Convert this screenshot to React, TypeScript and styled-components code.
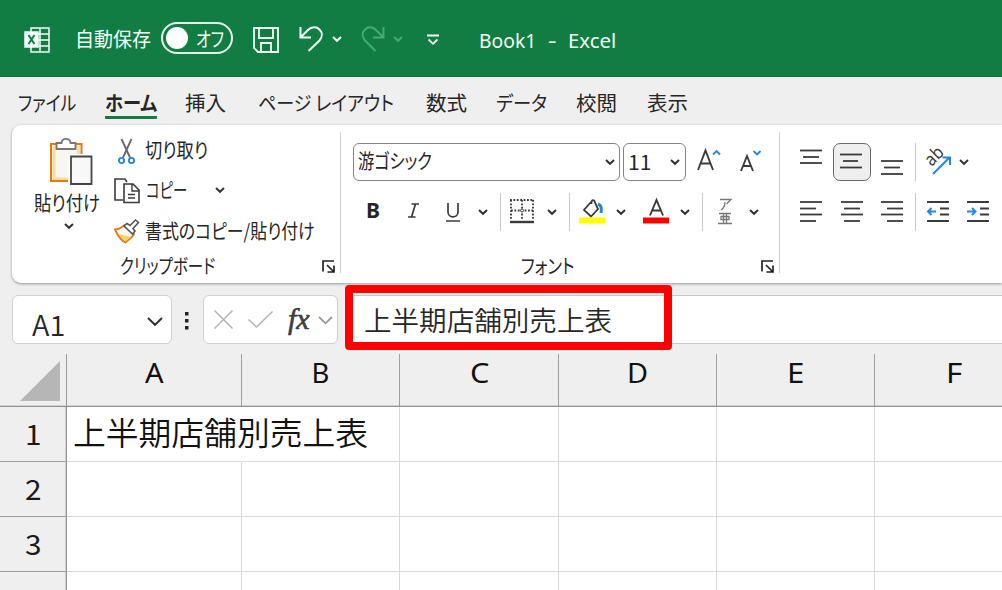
import React, { useLayoutEffect, useRef, useState } from 'react';
import styled, { createGlobalStyle } from 'styled-components';

const GlobalStyle = createGlobalStyle`
  * { box-sizing: border-box; }
  html, body { margin: 0; padding: 0; }
  body {
    background: #efefef;
    font-family: "Noto Sans CJK JP", "Noto Sans", sans-serif;
    color: #262626;
  }
  svg { display: block; flex: none; overflow: visible; }
`;

const Window = styled.div`
  width: 100vw;
  height: 100vh;
  overflow: hidden;
`;

/* ---------- text and icons ---------- */

const LabelBox = styled.span<{ $w: number; $ml?: number; $mt?: number; $size: number; $weight?: number; $color?: string; $font?: string }>`
  display: block;
  flex: none;
  width: ${p => p.$w}px;
  height: 24px;
  line-height: 24px;
  margin-left: ${p => p.$ml ?? 0}px;
  margin-top: ${p => p.$mt ?? 0}px;
  font-size: ${p => p.$size}px;
  font-weight: ${p => p.$weight ?? 400};
  color: ${p => p.$color ?? '#262626'};
  ${p => (p.$font ? `font-family: ${p.$font};` : '')}
  white-space: pre;
`;

const LabelText = styled.span`
  display: inline-block;
  transform-origin: 0 50%;
  font-feature-settings: "palt";
`;

type LabelProps = { text: string; w: number; ml?: number; mt?: number; size?: number; weight?: number; color?: string; font?: string };

function Label({ text, w, ml, mt, size = 20, weight, color, font }: LabelProps) {
  const ref = useRef<HTMLSpanElement>(null);
  const [scale, setScale] = useState(1);
  useLayoutEffect(() => {
    if (ref.current) setScale(w / ref.current.offsetWidth);
  }, [w, text]);
  return (
    <LabelBox $w={w} $ml={ml} $mt={mt} $size={size} $weight={weight} $color={color} $font={font}>
      <LabelText ref={ref} style={{ transform: `scaleX(${scale})` }}>{text}</LabelText>
    </LabelBox>
  );
}

const Drawing = styled.svg<{ $ml?: number; $mt?: number }>`
  margin-left: ${p => p.$ml ?? 0}px;
  margin-top: ${p => p.$mt ?? 0}px;
  fill: none;
`;

type IconProps = { w: number; h: number; ml?: number; mt?: number; stroke?: string; sw?: number; children: React.ReactNode };

const Icon = ({ w, h, ml, mt, stroke = '#3b3b3b', sw = 1.6, children }: IconProps) => (
  <Drawing width={w} height={h} viewBox={`0 0 ${w} ${h}`} $ml={ml} $mt={mt} stroke={stroke} strokeWidth={sw}>
    {children}
  </Drawing>
);

const Chevron = ({ ml, mt, color = '#333', w = 10, sw = 2 }: { ml?: number; mt?: number; color?: string; w?: number; sw?: number }) => (
  <Icon w={w} h={w / 2 + 1} ml={ml} mt={mt} stroke={color} sw={sw}>
    <path d={`M1 1 L${w / 2} ${w / 2 - 0.2} L${w - 1} 1`} />
  </Icon>
);

const Launcher = ({ ml, mt }: { ml?: number; mt?: number }) => (
  <Icon w={13} h={13} ml={ml} mt={mt} stroke="#222" sw={1.7}>
    <path d="M1 11.500V1H12M5 5L11.500 11.500M12 5.500V12H5.500" />
  </Icon>
);

const Lines = ({ rows, ml, mt }: { rows: [number, number, number][]; ml?: number; mt?: number }) => (
  <Icon w={23} h={24} ml={ml} mt={mt} sw={1.8}>
    {rows.map(([y, a, b]) => <path key={y} d={`M${a} ${y}H${b}`} />)}
  </Icon>
);

const SlantedLetters = styled.text`
  font: 400 18px "Noto Sans", sans-serif;
  fill: #3b3b3b;
  stroke: none;
`;

/* ---------- title bar ---------- */

const TitleBar = styled.header`
  display: flex;
  align-items: center;
  height: 77px;
  padding-left: 24px;
  background: #127d43;
  border-bottom: 1px solid #0f7039;
`;

const Toggle = styled.div`
  display: flex;
  align-items: center;
  flex: none;
  width: 72px;
  height: 32px;
  margin-left: 10px;
  padding-left: 3px;
  border: 2px solid #e6f7ec;
  border-radius: 16px;
`;

const Knob = styled.div`
  width: 22px;
  height: 22px;
  border-radius: 50%;
  background: #fff;
`;

/* ---------- tabs ---------- */

const Tabs = styled.nav`
  display: flex;
  height: 48px;
  padding: 14px 0 0 18px;
`;

const Tab = styled.div<{ $ml: number; $active?: boolean }>`
  flex: none;
  height: 28px;
  margin-left: ${p => p.$ml}px;
  border-bottom: ${p => (p.$active ? '3px solid #127d43' : '0')};
  border-radius: 1px;
`;

const tabs = [
  { text: 'ファイル', w: 58, ml: 0 },
  { text: 'ホーム', w: 52, ml: 29, active: true },
  { text: '挿入', w: 41, ml: 28 },
  { text: 'ページ レイアウト', w: 136, ml: 32 },
  { text: '数式', w: 41, ml: 32 },
  { text: 'データ', w: 51, ml: 29 },
  { text: '校閲', w: 41, ml: 29 },
  { text: '表示', w: 41, ml: 30 },
];

/* ---------- ribbon ---------- */

const Ribbon = styled.section`
  display: flex;
  height: 158px;
  margin-left: 12px;
  padding-top: 7px;
  background: #fff;
  border-radius: 9px 0 0 9px;
  box-shadow: 0 1px 3px rgba(0, 0, 0, 0.38);
`;

const Group = styled.div<{ $w: number }>`
  display: flex;
  flex-direction: column;
  flex: none;
  width: ${p => p.$w}px;
  height: 141px;
  border-right: 1px solid #cfcfcf;
`;

const LastGroup = styled(Group)`
  border-right: 0;
`;

const GroupBody = styled.div`
  display: flex;
  height: 122px;
`;

const GroupFooter = styled.div`
  display: flex;
  height: 19px;
`;

const PasteButton = styled.div`
  width: 102px;
  padding-top: 6px;
`;

const Stack = styled.div`
  flex: 1;
`;

const Line = styled.div<{ $h: number; $pl?: number }>`
  display: flex;
  align-items: center;
  height: ${p => p.$h}px;
  padding-left: ${p => p.$pl ?? 0}px;
`;

const Combo = styled.div<{ $w: number; $ml: number }>`
  display: flex;
  align-items: center;
  flex: none;
  width: ${p => p.$w}px;
  height: 38px;
  margin-left: ${p => p.$ml}px;
  border: 1.5px solid #858585;
  border-radius: 6px;
`;

const PressedButton = styled(Combo)`
  background: #efefef;
  border-color: #6a6a6a;
  border-radius: 7px;
`;

const Separator = styled.i<{ $ml: number }>`
  flex: none;
  width: 1px;
  height: 38px;
  margin-left: ${p => p.$ml}px;
  background: #c9c9c9;
`;

/* ---------- formula bar ---------- */

const FormulaBar = styled.section`
  display: flex;
  height: 71px;
  padding: 12px 0 0 12px;
`;

const Field = styled.div<{ $w: number; $ml?: number }>`
  display: flex;
  align-items: center;
  flex: none;
  width: ${p => p.$w}px;
  height: 49px;
  margin-left: ${p => p.$ml ?? 0}px;
  background: #fff;
  border: 1px solid #d0d0d0;
  border-radius: 6px;
`;

const Fx = styled.span`
  flex: none;
  width: 26px;
  height: 36px;
  margin-left: 15px;
  font: italic 400 30px/34px "Liberation Serif", serif;
  -webkit-text-stroke: 0.6px #3d3d3d;
  color: #3d3d3d;
`;

const FormulaInput = styled.div`
  position: relative;
  display: flex;
  align-items: center;
  flex: 1;
  height: 49px;
  margin-left: 8px;
  background: #fff;
  border: 1px solid #c8c8c8;
  border-width: 1px 0;
`;

const Highlight = styled.div`
  position: absolute;
  left: -1px;
  top: -11px;
  width: 327px;
  height: 65px;
  border: 8px solid #fe0000;
  border-radius: 4px;
`;

/* ---------- sheet ---------- */

const columns = '67px 175px 158px 159px 158px 158px 158px';

const HeaderRow = styled.div`
  display: grid;
  grid-template-columns: ${columns};
  height: 53px;
  border-bottom: 1px solid #939393;
  box-shadow: inset 0 -1px #d0d0d0;
`;

const Corner = styled.div`
  display: flex;
  padding: 7px 0 0 20px;
  border-right: 1px solid #999;
`;

const ColumnHead = styled.div`
  display: flex;
  justify-content: center;
  padding: 7px 0 0;
  border-right: 1px solid #a0a0a0;
`;

const SheetRow = styled.div`
  display: grid;
  grid-template-columns: ${columns};
  height: 55px;
`;

const RowHead = styled.div`
  display: flex;
  justify-content: center;
  padding: 14px 0 0 1px;
  background: #efefef;
  border-right: 1px solid #939393;
  border-bottom: 1px solid #a0a0a0;
  box-shadow: inset -1px 0 #d0d0d0;
`;

const Cell = styled.div<{ $open?: boolean }>`
  display: flex;
  padding: 12px 0 0 6px;
  background: #fff;
  border-right: 1px solid ${p => (p.$open ? '#fff' : '#dadada')};
  border-bottom: 1px solid #dadada;
`;

const LETTERS: [string, number][] = [['A', 19], ['B', 18], ['C', 19], ['D', 21], ['E', 17], ['F', 16]];
const latin = '"Noto Sans", sans-serif';

export default function App() {
  return (
    <Window>
      <GlobalStyle />
      <TitleBar>
        <Icon w={27} h={26} mt={3} stroke="#f3fff8" sw={1.5}>
          <path d="M7 5V1H25V25H7V20M7 7H25M7 13H25M7 19H25M16 1V25" />
          <path d="M1 5H14V20H1Z" fill="#f3fff8" />
          <path d="M4.500 8L10.500 17M10.500 8L4.500 17" stroke="#127d43" strokeWidth="2" />
        </Icon>
        <Label text="自動保存" w={76} ml={24} mt={1} color="#f2fff7" />
        <Toggle>
          <Knob />
          <Label text="オフ" w={28} ml={8} mt={1} color="#f2fff7" />
        </Toggle>
        <Icon w={26} h={26} ml={20} mt={4} stroke="#f3fff8" sw={1.8}>
          <path d="M1 1H25V25H5L1 21ZM6 1V11H20V1M8 25V16H18V25" />
        </Icon>
        <Icon w={25} h={26} ml={20} mt={2} stroke="#f3fff8" sw={2}>
          <path d="M1.500 1V11.500H12M2 11L9 4C12.500 .5 17.500 .5 20.500 3.500C23.500 6.500 23.500 11 20.500 14.500L9.500 25" />
        </Icon>
        <Chevron ml={8} mt={1} color="#f3fff8" />
        <Icon w={24} h={26} ml={19} mt={2} stroke="#45ab73" sw={2}>
          <path d="M22.500 1V11.500H12M22 11L15 4C11.500 .5 7 .5 4 3.500C1 6.500 1 11 4 14.500L14.500 25" />
        </Icon>
        <Chevron ml={8} mt={1} color="#45ab73" />
        <Icon w={12} h={12} ml={24} mt={4} stroke="#f3fff8" sw={1.8}>
          <path d="M0 1.500H12M1.500 5.500L6 9.800L10.500 5.500" />
        </Icon>
        <Label text="Book1" w={57} ml={40} mt={5} color="#f2fff7" font={latin} />
        <Label text="-" w={8} ml={12} mt={5} color="#f2fff7" font={latin} />
        <Label text="Excel" w={48} ml={12} mt={5} color="#f2fff7" font={latin} />
      </TitleBar>

      <Tabs>
        {tabs.map(t => (
          <Tab key={t.text} $ml={t.ml} $active={t.active}>
            <Label text={t.text} w={t.w} weight={t.active ? 700 : 400} />
          </Tab>
        ))}
      </Tabs>

      <Ribbon>
        <Group $w={329}>
          <GroupBody>
            <PasteButton>
              <Icon w={44} h={48} ml={37}>
                <path d="M2 6.500H32V44H2Z" fill="#fff" stroke="none" />
                <path d="M5 9H29.500V41H5Z" fill="#f8f6f2" stroke="#fbdf95" strokeWidth="3" />
                <path d="M10 6H2V43H19M24 6H32.500V18" stroke="#e27a1a" strokeWidth="2" />
                <path d="M7.500 11V5H12.500C13 -0.500 21 -0.500 21.500 5H26.500V11Z" fill="#fff" stroke="#777" strokeWidth="1.8" />
                <path d="M22 18.500H42.500V46H22Z" fill="#f8f8f8" stroke="#fff" strokeWidth="5" />
                <path d="M22 18.500H42.500V46H22Z" fill="#f8f8f8" stroke="#444" strokeWidth="1.800" />
              </Icon>
              <Label text="貼り付け" w={66} ml={22} mt={5} />
              <Chevron ml={52} mt={8} />
            </PasteButton>
            <Stack>
              <Line $h={38} $pl={4}>
                <Icon w={17} h={25}>
                  <path d="M3.500 0L12 18.500M13.500 0L5 18.500" stroke="#666" strokeWidth="1.8" />
                  <circle cx="3.500" cy="21.500" r="2.600" stroke="#2488d8" strokeWidth="1.900" />
                  <circle cx="13.500" cy="21.500" r="2.600" stroke="#2488d8" strokeWidth="1.900" />
                </Icon>
                <Label text="切り取り" w={63} ml={10} mt={-3} />
              </Line>
              <Line $h={40}>
                <Icon w={26} h={26} mt={1}>
                  <path d="M9 22H1V1H11L13 4" />
                  <path d="M10 6H19L25 12V24.500H10Z" fill="#fff" />
                  <path d="M18 6V13H25M14 16.500H21M14 20H21" strokeWidth="1.400" />
                </Icon>
                <Label text="コピー" w={41} ml={6} />
                <Chevron ml={28} />
              </Line>
              <Line $h={42}>
                <Icon w={25} h={25}>
                  <path d="M1 10.500C6 10.500 8 8 11 6L20 15C18 19 15 20 11.500 23.500C8 22 4 17 1 10.500Z" fill="#fffaf0" stroke="#e27a1a" strokeWidth="1.900" />
                  <path d="M4.500 15L17 18L11.500 22.500C9 21 7 19 4.500 15Z" fill="#f9cf6a" stroke="none" />
                  <path d="M10 7L13 4.500L16 6.500L21.500 1L24.500 3.500L19 9.500L21 12L18.500 15Z" fill="#fff" stroke="#555" />
                </Icon>
                <Label text="書式のコピー/貼り付け" w={170} ml={6} />
              </Line>
            </Stack>
          </GroupBody>
          <GroupFooter>
            <Label text="クリップボード" w={95} ml={108} />
            <Launcher ml={107} mt={6} />
          </GroupFooter>
        </Group>

        <Group $w={439}>
          <GroupBody>
            <Stack>
              <Line $h={59} $pl={12}>
                <Combo $w={267} $ml={0}>
                  <Label text="游ゴシック" w={74} ml={4} mt={-2} />
                  <Chevron ml={173} mt={1} />
                </Combo>
                <Combo $w={63} $ml={3}>
                  <Label text="11" w={23} ml={4} mt={-2} size={21} />
                  <Chevron ml={19} mt={1} />
                </Combo>
                <Icon w={24} h={22} ml={11} mt={-3} sw={1.9}>
                  <path d="M1 21L8.500 1.500L16 21M3.500 14.500H13.500" />
                  <path d="M16 5.500L19.500 2L23 5.500" stroke="#2488d8" />
                </Icon>
                <Icon w={21} h={22} ml={19} mt={-2} sw={1.9}>
                  <path d="M1 21L7 6L13 21M3 16H11" />
                  <path d="M13.500 1L17 4.500L20.500 1" stroke="#2488d8" />
                </Icon>
              </Line>
              <Line $h={41}>
                <Label text="B" w={14} ml={25} mt={-3} size={21} weight={700} font={latin} />
                <Icon w={11} h={15} ml={28} mt={-2} sw={1.7}>
                  <path d="M3.500 1H11M0 14H7.500M7.500 1L3.500 14" />
                </Icon>
                <Icon w={14} h={19} ml={27} mt={2} sw={1.7}>
                  <path d="M2 0V9C2 15.500 12 15.500 12 9V0M0 18H14" />
                </Icon>
                <Chevron ml={18} mt={1} />
                <Separator $ml={12} />
                <Icon w={24} h={25} ml={9} mt={-1} sw={1.8}>
                  <path d="M0 1H24M1 1V21M12 1V21M23 1V21M1 11.500H23" strokeDasharray="1.800 1.600" />
                  <path d="M0 23H24" strokeWidth="2.400" />
                  <circle cx="12" cy="11.500" r="1.500" fill="#fff" strokeWidth="1" />
                </Icon>
                <Chevron ml={13} mt={1} />
                <Separator $ml={12} />
                <Icon w={26} h={25} ml={9} sw={1.8}>
                  <path d="M12 3L5 11L12 17.500L19 10L16 3.500C15.500 0 12 0 12.500 5" />
                  <path d="M19 5C22 6 23 9 22 14" stroke="#2488c8" strokeWidth="3" />
                  <path d="M0 21.500H26" stroke="#ffff00" strokeWidth="6" />
                </Icon>
                <Chevron ml={11} mt={1} />
                <Icon w={26} h={25} ml={17} sw={1.9}>
                  <path d="M7 16.500L13.500 1L20 16.500M9 11.500H18" />
                  <path d="M0 21.500H26" stroke="#fe0000" strokeWidth="6" />
                </Icon>
                <Chevron ml={11} mt={1} />
                <Separator $ml={12} />
                <Icon w={14} h={27} ml={15} stroke="#777" sw={1.3}>
                  <path d="M2 1.500H13L8.500 6M7 4C7 8 6 10 3 12M1 15.500H13M3 18.500H11V21.500H3ZM5.500 15.500V25M8.500 15.500V25M0 25.500H14" />
                </Icon>
                <Chevron ml={17} mt={1} />
              </Line>
            </Stack>
          </GroupBody>
          <GroupFooter>
            <Label text="フォント" w={53} ml={180} />
            <Launcher ml={187} mt={6} />
          </GroupFooter>
        </Group>

        <LastGroup $w={222}>
          <GroupBody>
            <Stack>
              <Line $h={59} $pl={20}>
                <Lines rows={[[0.5, 0, 22], [7, 3, 19], [13, 0, 22]]} />
                <PressedButton $w={38} $ml={10}>
                  <Lines ml={6} rows={[[4.5, 0, 22], [11, 3, 18], [17.5, 0, 22]]} />
                </PressedButton>
                <Lines ml={10} rows={[[11, 0, 22], [17.5, 3, 19], [24, 0, 22]]} />
                <Separator $ml={11} />
                <Icon w={27} h={26} ml={9} sw={2}>
                  <SlantedLetters transform="translate(6.500 18) rotate(-45)" textLength="19" lengthAdjust="spacingAndGlyphs">ab</SlantedLetters>
                  <path d="M8 25L24 9M17.500 8.500H25V16" stroke="#2488d8" />
                </Icon>
                <Chevron ml={7} />
              </Line>
              <Line $h={41}>
                <Lines ml={20} rows={[[2, 0, 22], [8.5, 0, 16], [14.5, 0, 22], [21, 0, 16]]} />
                <Lines ml={18} rows={[[2, 0, 22], [8.5, 3, 19], [14.5, 0, 22], [21, 3, 19]]} />
                <Lines ml={17} rows={[[2, 0, 22], [8.5, 6, 22], [14.5, 0, 22], [21, 6, 22]]} />
                <Separator $ml={11} />
                <Icon w={23} h={24} ml={11} sw={1.8}>
                  <path d="M0 2H22M13 8.500H22M13 14.500H22M0 21H22" />
                  <path d="M9 11.500H1M4.500 8L1 11.500L4.500 15" stroke="#2488d8" strokeWidth="2" />
                </Icon>
                <Icon w={23} h={24} ml={17} sw={1.8}>
                  <path d="M0 2H22M13 8.500H22M13 14.500H22M0 21H22" />
                  <path d="M0 11.500H8.500M5 8L8.500 11.500L5 15" stroke="#2488d8" strokeWidth="2" />
                </Icon>
              </Line>
            </Stack>
          </GroupBody>
        </LastGroup>
      </Ribbon>

      <FormulaBar>
        <Field $w={160}>
          <Label text="A1" w={33} ml={19} mt={9} size={28} weight={350} />
          <Chevron ml={82} mt={4} w={16} />
        </Field>
        <Icon w={4} h={18} ml={13} mt={17} stroke="none">
          <path d="M0 0H3.500V3.500H0ZM0 7H3.500V10.500H0ZM0 14H3.500V17.500H0Z" fill="#222" />
        </Icon>
        <Field $w={135} $ml={14}>
          <Icon w={19} h={19} ml={10} stroke="#b5b5b5" sw={1.6}>
            <path d="M.5 .5L18.500 18.500M18.500 .5L.5 18.500" />
          </Icon>
          <Icon w={25} h={17} ml={15} stroke="#b5b5b5" sw={1.6}>
            <path d="M.5 8.500L8.500 16L24.500 .5" />
          </Icon>
          <Fx>fx</Fx>
          <Chevron ml={4} mt={2} w={15} sw={1.8} color="#999" />
        </Field>
        <FormulaInput>
          <Label text="上半期店舗別売上表" w={248} ml={18} mt={1} size={27} weight={350} />
          <Highlight />
        </FormulaInput>
      </FormulaBar>

      <HeaderRow>
        <Corner>
          <Icon w={40} h={40} stroke="none"><path d="M40 0V40H0Z" fill="#b6b6b6" /></Icon>
        </Corner>
        {LETTERS.map(([letter, w]) => (
          <ColumnHead key={letter}><Label text={letter} w={w} size={27.5} color="#111" font={latin} /></ColumnHead>
        ))}
      </HeaderRow>
      {[1, 2, 3, 4].map(n => (
        <SheetRow key={n}>
          <RowHead><Label text={String(n)} w={17} size={28} color="#1a1a1a" /></RowHead>
          {LETTERS.map(([letter]) => (
            <Cell key={letter} $open={n === 1 && letter === 'A'}>
              {n === 1 && letter === 'A' && <Label text="上半期店舗別売上表" w={295} size={32} weight={350} color="#111" />}
            </Cell>
          ))}
        </SheetRow>
      ))}
    </Window>
  );
}
